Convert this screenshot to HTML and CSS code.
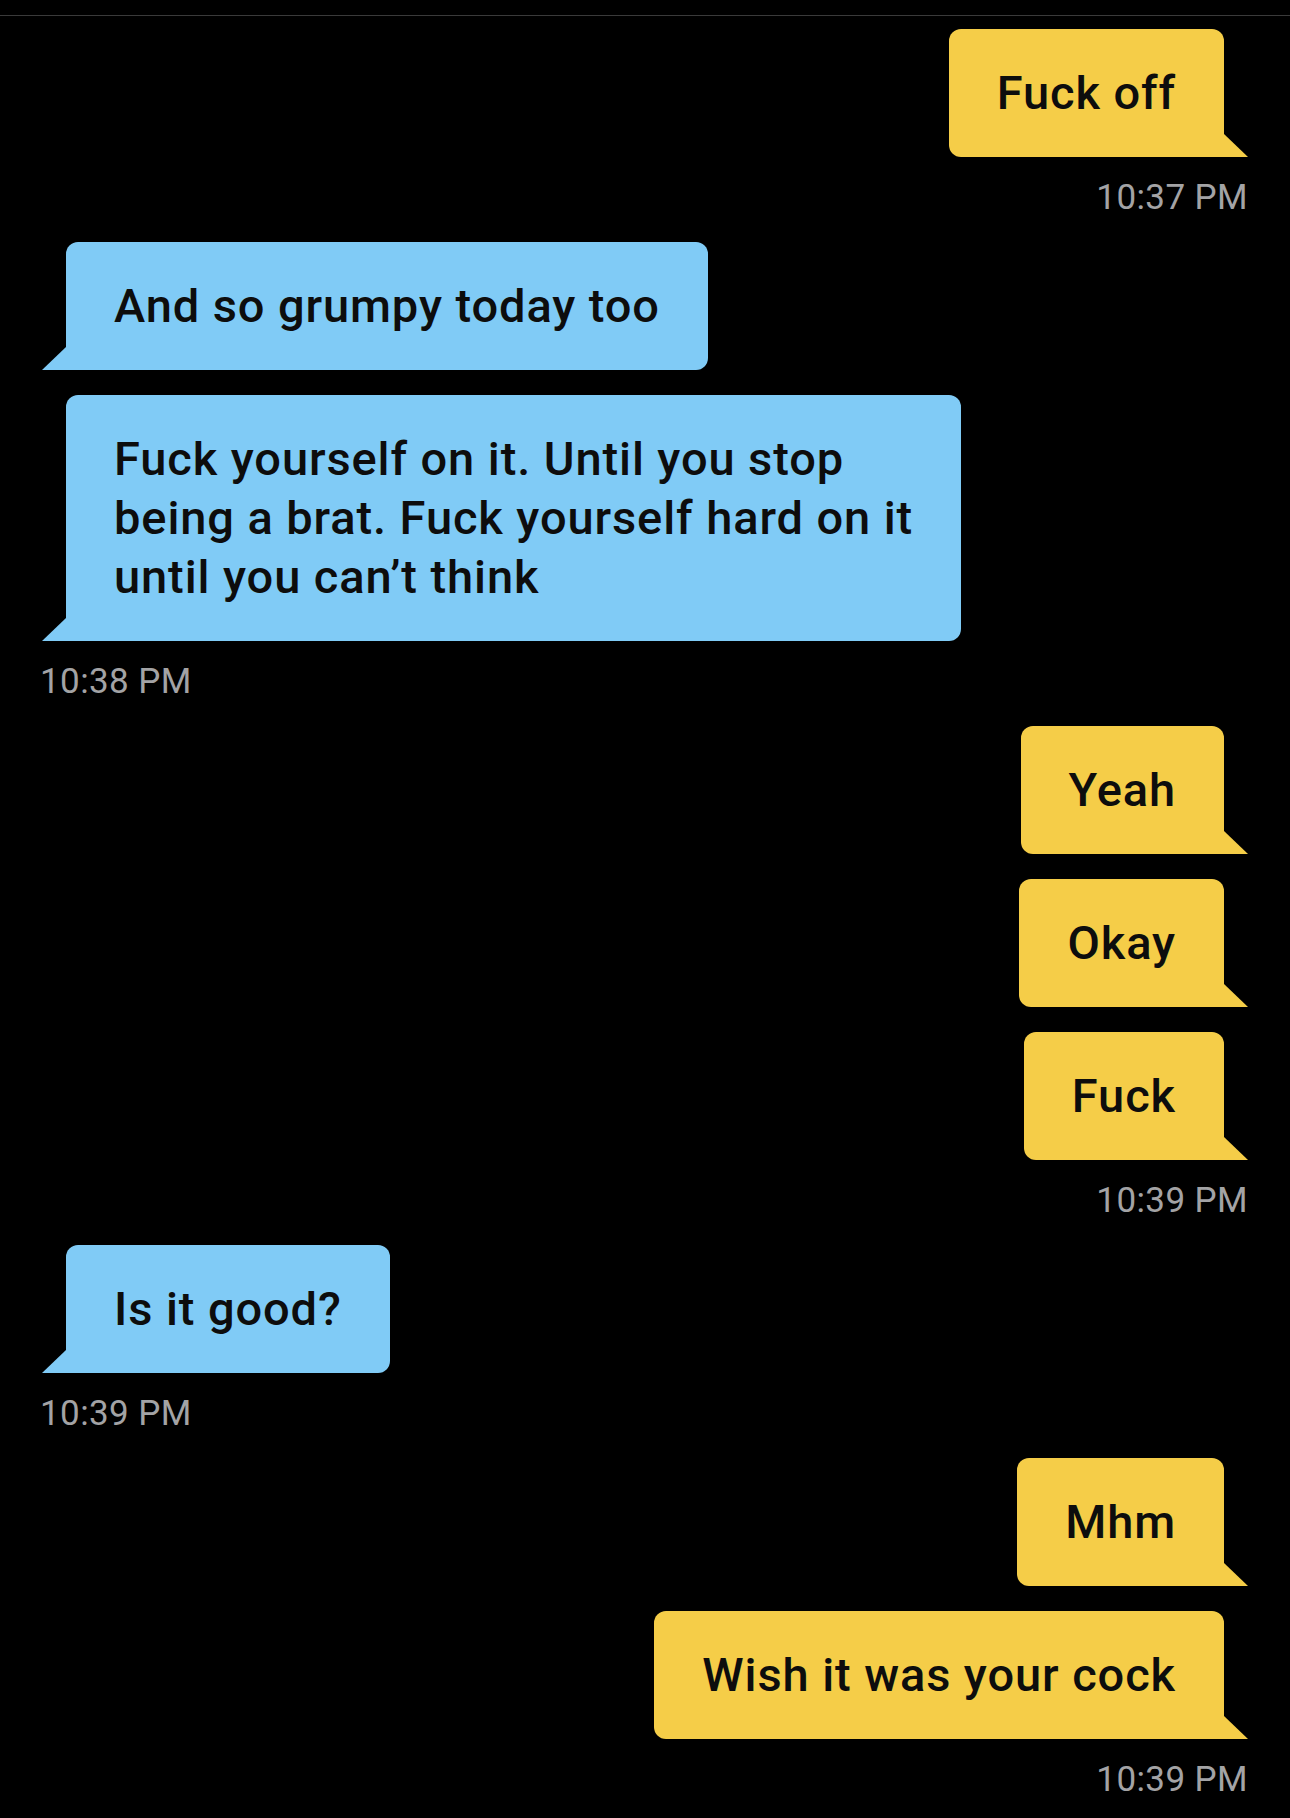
FILE: index.html
```html
<!DOCTYPE html>
<html lang="en">
<head>
    <meta charset="UTF-8">
    <meta name="viewport" content="width=device-width, initial-scale=1.0">
    <title>Chat</title>
    <link rel="stylesheet" href="styles.css">
</head>
<body>
    <div class="topbar"></div>
    <div class="chat">
        <div class="group sent">
            <div class="bubble">Fuck off</div>
            <div class="time">10:37 PM</div>
        </div>
        <div class="group received">
            <div class="bubble">And so grumpy today too</div>
            <div class="bubble">Fuck yourself on it. Until you stop<br>being a brat. Fuck yourself hard on it<br>until you can’t think</div>
            <div class="time">10:38 PM</div>
        </div>
        <div class="group sent">
            <div class="bubble">Yeah</div>
            <div class="bubble">Okay</div>
            <div class="bubble">Fuck</div>
            <div class="time">10:39 PM</div>
        </div>
        <div class="group received">
            <div class="bubble">Is it good?</div>
            <div class="time">10:39 PM</div>
        </div>
        <div class="group sent">
            <div class="bubble">Mhm</div>
            <div class="bubble">Wish it was your cock</div>
            <div class="time">10:39 PM</div>
        </div>
    </div>
</body>
</html>
```

FILE: styles.css
```css
*{
    box-sizing: border-box;
}
body{
    margin: 0;
    background: #000;
    font-family: Roboto, "Liberation Sans", sans-serif;
    min-height: 1818px;
}
.topbar{
    height: 16px;
    border-bottom: 1px solid #3a3a3a;
}
.chat{
    display: flex;
    flex-direction: column;
    gap: 24px;
    padding: 13px 42px 0;
}
.group{
    display: flex;
    flex-direction: column;
    gap: 25px;
}
.group.sent{
    align-items: flex-end;
}
.group.received{
    align-items: flex-start;
}
.bubble{
    position: relative;
    padding: 34px 48px 35px;
    font-size: 47px;
    font-weight: 500;
    line-height: 59px;
    letter-spacing: 0.9px;
    color: #0d0d0d;
    white-space: nowrap;
}
.bubble::after{
    content: "";
    position: absolute;
    bottom: 0;
    width: 24px;
    height: 23px;
}
.sent .bubble{
    margin-right: 24px;
    background: #f5cd48;
    border-radius: 12px 12px 0 12px;
}
.sent .bubble::after{
    right: -24px;
    background: #f5cd48;
    clip-path: polygon(0 0, 100% 100%, 0 100%);
}
.received .bubble{
    margin-left: 24px;
    background: #80cbf6;
    border-radius: 12px 12px 12px 0;
}
.received .bubble::after{
    left: -24px;
    background: #80cbf6;
    clip-path: polygon(100% 0, 100% 100%, 0 100%);
}
.time{
    margin-top: -4px;
    height: 40px;
    line-height: 40px;
    font-size: 35px;
    letter-spacing: 0.4px;
    color: #a3a3a5;
}
.received .time{
    margin-left: -2px;
}
```
